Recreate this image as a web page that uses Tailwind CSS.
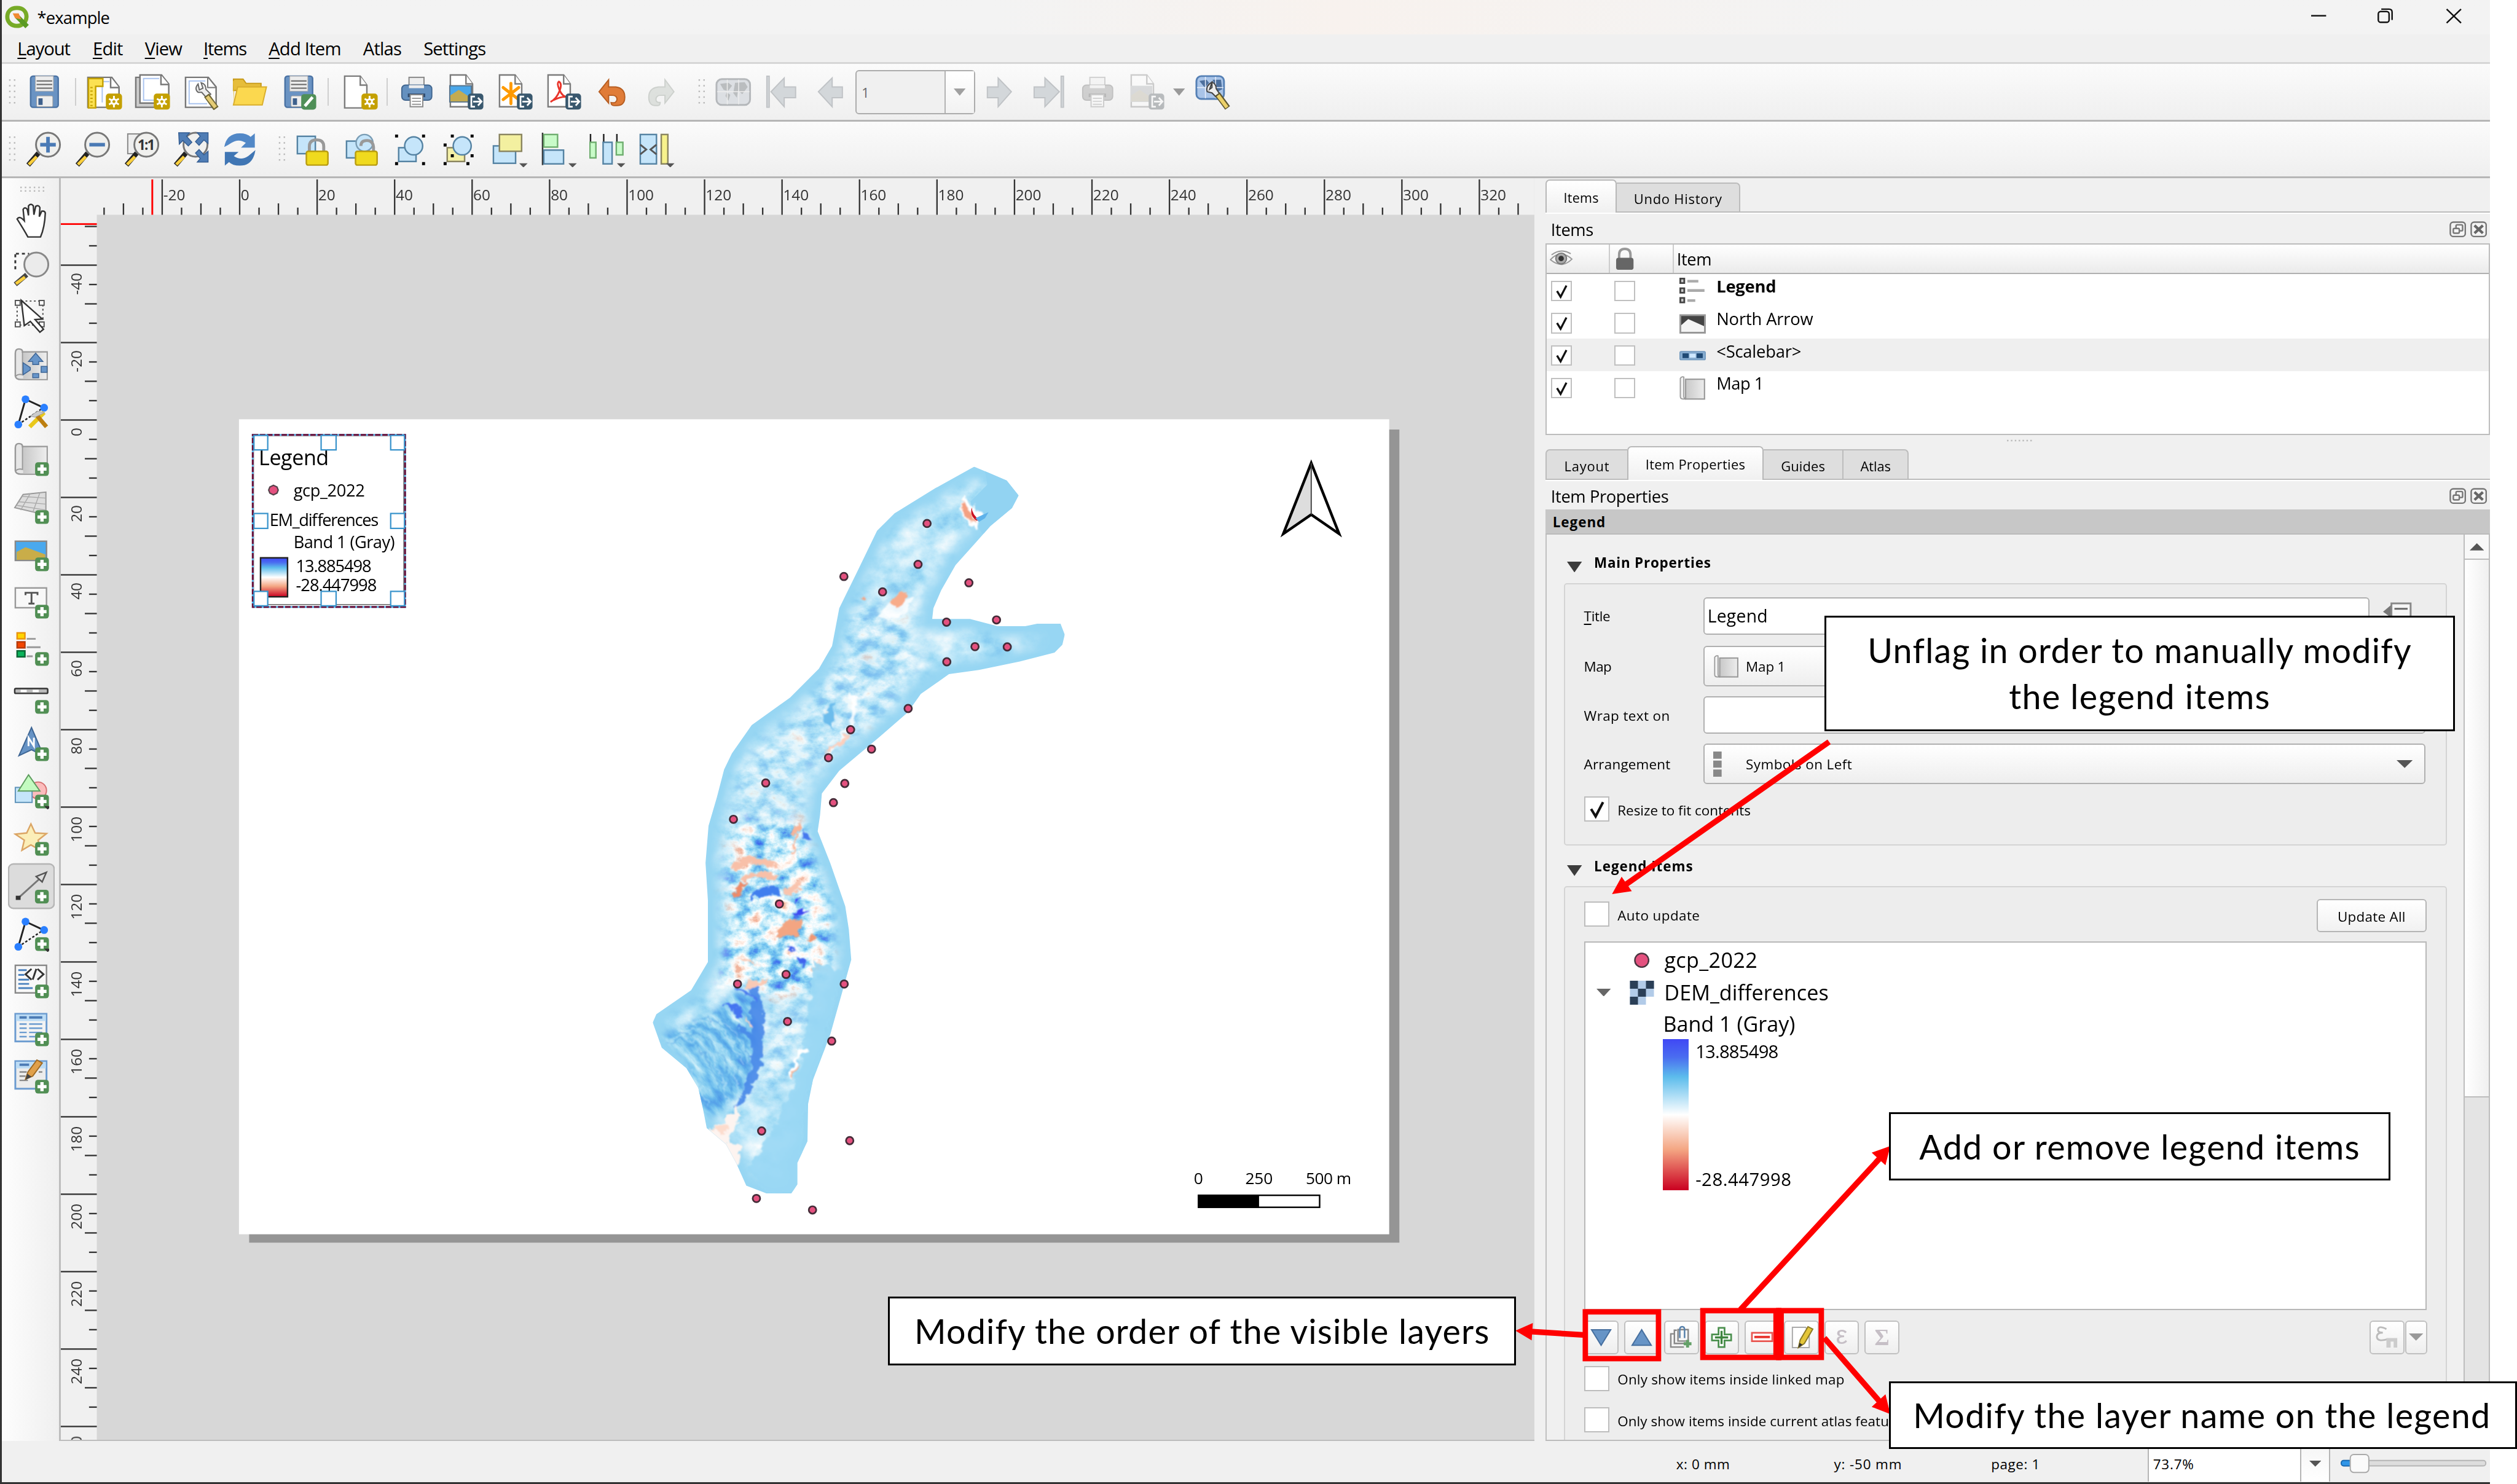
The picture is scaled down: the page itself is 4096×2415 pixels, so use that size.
<!DOCTYPE html>
<html lang="en">
<head>
<meta charset="utf-8">
<title>*example</title>
<script src="https://cdn.jsdelivr.net/npm/@tailwindcss/browser@4"></script>
</head>
<body class="h-[2415px] w-[4096px] overflow-hidden bg-white">
<svg class="absolute size-0">
  <symbol id="plus" viewBox="0 0 60 60"><rect x="36" y="36" width="23" height="23" rx="5" fill="#518f54"/><path d="M47.500 40v15M40 47.500h15" stroke="#fff" stroke-width="5.500"/></symbol>
  <symbol id="gear" viewBox="0 0 60 60"><rect x="32" y="33" width="27" height="27" rx="5" fill="#c4a000"/><path d="M45.500 37v19M37.300 41.700l16.400 9.500M53.700 41.700l-16.400 9.500" stroke="#fff" stroke-width="3"/><circle cx="45.500" cy="46.500" r="5.500" fill="#fff"/><circle cx="45.500" cy="46.500" r="2.500" fill="#c4a000"/></symbol>
  <symbol id="export" viewBox="0 0 60 60"><rect x="33" y="33" width="26" height="27" rx="5" fill="#39586e"/><path d="M45 38h-6v17h6M42 46.500h13M50 40l6 6.500-6 6.500" fill="none" stroke="#fff" stroke-width="2.800"/></symbol>
  <symbol id="page" viewBox="0 0 60 60"><path d="M4 2h26l11 15v38H4z" fill="#fff" stroke="#7c7c7c" stroke-width="2.500"/><path d="M30 2v15h11" fill="#fff" stroke="#7c7c7c" stroke-width="2.500"/></symbol>
  <symbol id="floppy" viewBox="0 0 60 60"><rect x="7" y="4" width="46" height="52" rx="4" fill="#6a93c3" stroke="#4a72a3" stroke-width="2.500"/><rect x="15" y="4" width="30" height="25" fill="#ececec" stroke="#aaa"/><path d="M17 12h26M17 18h26M17 24h26" stroke="#666" stroke-width="2"/><rect x="17" y="37" width="27" height="18" rx="2" fill="#eee" stroke="#999"/><rect x="20" y="41" width="7" height="11" fill="#3e608c"/></symbol>
  <symbol id="lens" viewBox="0 0 60 60"><path d="M21 36L4 56" stroke="#222" stroke-width="8"/><path d="M18 42L5 55" stroke="#fbcf3d" stroke-width="5"/><circle cx="37" cy="22" r="20" fill="#f0f0ee" stroke="#777" stroke-width="3"/></symbol>
  <symbol id="printer" viewBox="0 0 60 60"><rect x="17" y="6" width="25" height="20" fill="#eee" stroke="#888" stroke-width="2"/><rect x="5" y="19" width="50" height="25" rx="6" fill="#6490bf" stroke="#41668f" stroke-width="2"/><path d="M17 19h25v5H17z" fill="#eee"/><rect x="15" y="33" width="29" height="6" fill="#314d70"/><rect x="19" y="35" width="21" height="20" fill="#fff" stroke="#888" stroke-width="2"/><path d="M22 41h15M22 46h15M22 51h15" stroke="#999" stroke-width="2"/></symbol>
  <linearGradient id="paper"><stop offset="0" stop-color="#c8c8c8"/><stop offset="1" stop-color="#ededed"/></linearGradient>
  <symbol id="sheet" viewBox="0 0 60 60"><path d="M3 12q0-7 6-7t6 5h41v46H12q-8 0-9-6z" fill="#e6e6e6" stroke="#989898" stroke-width="2.500"/><path d="M16 11h39v44H16z" fill="url(#paper)"/><path d="M15 10v38q-7-2-11 2" fill="none" stroke="#989898" stroke-width="2"/></symbol>
  <symbol id="scroll" viewBox="0 0 60 60"><rect x="14" y="10" width="43" height="45" fill="url(#paper)" stroke="#999" stroke-width="3"/><path d="M2 8q3-5 8-3v44q0 5 5 6h-7q-6 0-6-6z" fill="#f2f2f2" stroke="#999" stroke-width="2.500"/></symbol>
  <symbol id="tick" viewBox="0 0 40 40"><path d="M10 20l8 13L31 8" fill="none" stroke="#111" stroke-width="4.500"/></symbol>
  <symbol id="grip" viewBox="0 0 12 44"><path d="M2 1v42M10 1v42" stroke="#bbb" stroke-width="2.500" stroke-dasharray="2.500 7"/></symbol>
  <symbol id="popout" viewBox="0 0 28 27"><rect x="1.500" y="1.500" width="25" height="24" rx="5" fill="#f4f4f4" stroke="#777" stroke-width="2.500"/><rect x="6.500" y="12" width="10" height="8" rx="2" fill="none" stroke="#777" stroke-width="2.500"/><path d="M11 12V8q0-2 2-2h7q2 0 2 2v6q0 2-2 2h-3" fill="none" stroke="#777" stroke-width="2.500"/></symbol>
  <symbol id="shut" viewBox="0 0 28 27"><rect x="1.500" y="1.500" width="25" height="24" rx="5" fill="#f4f4f4" stroke="#777" stroke-width="2.500"/><path d="M7 7l14 13M21 7L7 20" stroke="#666" stroke-width="4.500"/></symbol>
  <symbol id="nodes" viewBox="0 0 60 60"><path d="M8 52L20 10L50 24" fill="none" stroke="#222" stroke-width="3"/><path d="M8 52L50 24" stroke="#222" stroke-width="2.500" stroke-dasharray="4 3"/><circle cx="20" cy="10" r="6.500" fill="#2a7fff"/><circle cx="51" cy="24" r="6.500" fill="#2a7fff"/><circle cx="8" cy="52" r="6.500" fill="#2a7fff"/></symbol>
  <linearGradient id="ramp" x2="0" y2="1"><stop offset="0" stop-color="#4048f5"/><stop offset=".12" stop-color="#4a6df0"/><stop offset=".25" stop-color="#5cbcec"/><stop offset=".5" stop-color="#fff"/><stop offset=".73" stop-color="#f4a683"/><stop offset="1" stop-color="#ca0020"/></linearGradient>
</svg>

<div id="root" class="relative flex h-[2475px] w-[4197px] flex-col overflow-hidden bg-white font-['Open_Sans','Noto_Sans',sans-serif] leading-none text-black [zoom:0.97593]">
<div class="flex h-[2475px] w-[4152px] flex-col border-b-[3.1px] border-l-[3.1px] border-[#333] bg-[#f0f0f0]">

  <!-- Title bar -->
  <header class="flex h-[57px] shrink-0 items-center bg-linear-to-r from-[#f3f3f3] from-40% via-[#f8f2ee] via-54% to-[#f3f3f3] to-75% pl-[5px]">
    <svg class="h-[38px] w-[41px]" viewBox="0 0 41 38"><path d="M20 4C9 4 4 11 4 19s6 15 16 15c4 0 7-1 9-3M20 4c11 0 16 7 16 15 0 3-1 6-3 9" fill="none" stroke="#77ab27" stroke-width="7"/><path d="M20 18l17 17" stroke="#5a9a24" stroke-width="8"/><path d="M13 13h10l4 10-10-2z" fill="#f08a32"/></svg>
    <span data-w="121" class="mt-[1px] ml-[13px] whitespace-nowrap text-[28px]">*example</span>
    <svg class="mr-[47px] ml-auto h-[36px] w-[252px]" viewBox="0 0 252 36"><g fill="none" stroke="#111" stroke-width="2.500"><path d="M1 16h25"/><rect x="113" y="9" width="18" height="18" rx="4"/><path d="M118 5h13q5 0 5 5v13"/><path d="M227 5l24 23M251 5l-24 23"/></g></svg>
  </header>

  <!-- Menu -->
  <nav class="flex h-[50px] shrink-0 items-center border-b-[3.1px] border-[#d6d6d6] pt-[2px] pl-[26px] text-[30px] whitespace-nowrap">
    <span data-w="88"><u class="underline-offset-4">L</u>ayout</span>
    <span data-w="50" class="ml-[38px]"><u class="underline-offset-4">E</u>dit</span>
    <span data-w="62" class="ml-[37px]"><u class="underline-offset-4">V</u>iew</span>
    <span data-w="72" class="ml-[36px]"><u class="underline-offset-4">I</u>tems</span>
    <span data-w="121" class="ml-[37px]"><u class="underline-offset-4">A</u>dd Item</span>
    <span data-w="64" class="ml-[37px]">Atlas</span>
    <span data-w="104" class="ml-[37px]">Settings</span>
  </nav>

  <!-- Layout toolbar -->
  <div class="flex h-[96px] shrink-0 items-center border-b-[3.1px] border-[#b6b6b6] bg-linear-to-b from-[#fbfbfb] to-[#efefef] pl-[11px] [&>svg]:shrink-0">
    <svg class="h-[44px] w-[12px]"><use href="#grip"/></svg>
    <svg class="ml-[18px] size-[60px]"><use href="#floppy"/></svg>
    <i class="ml-[21px] h-[46px] w-[2px] bg-[#cfcfcf]"></i>
    <svg class="ml-[17px] size-[60px]" viewBox="0 0 60 60"><path d="M2 6h40l12 16v34H2z" fill="#fff" stroke="#777" stroke-width="2.500"/><path d="M40 6v17h14" fill="#fff" stroke="#777" stroke-width="2.500"/><path d="M26 13h12M26 14v34" stroke="#aac4ef" stroke-width="2"/><path d="M3 8h24v13H15v36H3z" fill="#fbe152" stroke="#c4a000" stroke-width="2.500"/><path d="M8 22v34" stroke="#c4a000" stroke-width="4" stroke-dasharray="2 4"/><use href="#gear"/></svg>
    <svg class="ml-[20px] size-[60px]" viewBox="0 0 60 60"><path d="M2 6h10v42h30v8H2z" fill="#ccc" stroke="#777" stroke-width="2.500"/><path d="M9 2h36l12 15v32H9z" fill="#fff" stroke="#777" stroke-width="2.500"/><path d="M44 2v16h13" fill="#fff" stroke="#777" stroke-width="2.500"/><path d="M41 8H15v36h30" fill="none" stroke="#aac4ef" stroke-width="2"/><use href="#gear"/></svg>
    <svg class="ml-[22px] size-[60px]" viewBox="0 0 60 60"><path d="M3 6h38l13 16v34H3z" fill="#fff" stroke="#777" stroke-width="2.500"/><path d="M36 12H9v38h30" fill="none" stroke="#aac4ef" stroke-width="2"/><path d="M40 6v17h14" fill="none" stroke="#777" stroke-width="2"/><path d="M24 17q-7 8 0 14l6 0 8 9 7-6-8-8q0-9-8-11l3 9-6 3z" fill="#eee" stroke="#666" stroke-width="2"/><path d="M38 36L54 58" stroke="#6d6432" stroke-width="10"/><path d="M39 38L53 56" stroke="#e5cc75" stroke-width="6"/></svg>
    <svg class="ml-[20px] size-[60px]" viewBox="0 0 60 60"><path d="M3 9h16l5 7h25v12H3z" fill="#e6bd3a" stroke="#c79a1b" stroke-width="2"/><path d="M2 12h2l0 40H4z" fill="#e6bd3a"/><path d="M10 22h48l-7 30H3z" fill="#fbd84f" stroke="#d9ae2c" stroke-width="2"/></svg>
    <svg class="ml-[22px] size-[60px]" viewBox="0 0 60 60"><use href="#floppy"/><rect x="34" y="34" width="25" height="26" rx="5" fill="#4f8f57"/><path d="M40 54l13-15" stroke="#fff" stroke-width="5"/></svg>
    <i class="ml-[18px] h-[46px] w-[2px] bg-[#cfcfcf]"></i>
    <svg class="ml-[23px] size-[60px]" viewBox="0 0 60 60"><g transform="translate(0 2)"><use href="#page"/></g><use href="#gear"/></svg>
    <i class="ml-[14px] h-[46px] w-[2px] bg-[#cfcfcf]"></i>
    <svg class="ml-[18px] size-[60px]"><use href="#printer"/></svg>
    <svg class="ml-[22px] size-[60px]" viewBox="0 0 60 60"><use href="#page"/><rect x="3" y="20" width="36" height="27" fill="#4aa7ea" stroke="#57728a" stroke-width="2"/><path d="M4 36l14-9 20 13v6H4z" fill="#c4ab51"/><use href="#export"/></svg>
    <svg class="ml-[22px] size-[60px]" viewBox="0 0 60 60"><use href="#page"/><path d="M23 16v34M10 23l26 20M36 23L10 43" stroke="#ff9a00" stroke-width="5" stroke-linecap="round"/><use href="#export"/></svg>
    <svg class="ml-[21px] size-[60px]" viewBox="0 0 60 60"><use href="#page"/><path d="M8 47q10-5 15-18t-1-16q-4 2 1 14t14 12q-10-2-24 5" fill="none" stroke="#e9352b" stroke-width="3"/><use href="#export"/></svg>
    <svg class="ml-[21px] size-[60px]" viewBox="0 0 60 60"><path d="M8 30L24 10v12h12q15 2 15 17t-15 14q-8 1-8-5 9 2 10-5 0-7-8-7h-6v13z" fill="#e07c38" stroke="#b75e22" stroke-width="2"/></svg>
    <svg class="ml-[21px] size-[60px] opacity-60" viewBox="0 0 60 60"><path d="M52 30L37 10v12H26Q10 24 10 39t13 14q6 1 6-5-7 0-7-5 0-7 8-7h7v13z" fill="#cfd4cf" stroke="#b3b9b3" stroke-width="2"/></svg>
    <svg class="ml-[32px] h-[44px] w-[12px]"><use href="#grip"/></svg>
    <svg class="ml-[17px] size-[60px]" viewBox="0 0 60 60"><rect x="2" y="9" width="56" height="43" rx="9" fill="#dcdfe3" stroke="#b5b8bb" stroke-width="3"/><path d="M8 17l14-2 6 5-7 9-7-2zM19 31l6 4-3 10-5-8zM33 15l16-1 5 8-9 12-7-6-2 12-6-8z" fill="#babdbf"/><path d="M3 30h54M20 10v41M39 10v41" stroke="#eee" stroke-width="1.500"/></svg>
    <svg class="ml-[21px] size-[60px]" viewBox="0 0 60 60"><g fill="#d3d7da" stroke="#c0c3c6" stroke-width="2"><path d="M5 4h4v52H5z"/><path d="M12 30L34 7v15h19v18H34v15z"/></g></svg>
    <svg class="ml-[22px] size-[60px]" viewBox="0 0 60 60"><path d="M9 30L32 7v15h17v18H32v15z" fill="#d3d7da" stroke="#c0c3c6" stroke-width="2"/></svg>
    <div class="ml-[11px] flex h-[74px] w-[199px] rounded-[6px] border-[2.100px] border-[#acacac] bg-[#f0f0f0]">
      <span class="flex flex-1 items-center pt-[3px] pl-[8px] text-[22px] text-[#666]">1</span>
      <span class="flex w-[49px] items-center justify-center border-l-[2.100px] border-[#b3b3b3] bg-linear-to-b from-white to-[#f2f2f2]"><svg class="h-[12px] w-[20px]" viewBox="0 0 20 12"><path d="M0 0h20L10 12z" fill="#a0a0a0"/></svg></span>
    </div>
    <svg class="ml-[11px] size-[60px]" viewBox="0 0 60 60"><path d="M50 30L28 7v15H10v18h18v15z" fill="#d3d7da" stroke="#c0c3c6" stroke-width="2"/></svg>
    <svg class="ml-[22px] size-[60px]" viewBox="0 0 60 60"><g fill="#d3d7da" stroke="#c0c3c6" stroke-width="2"><path d="M51 4h4v52h-4z"/><path d="M48 30L24 7v15H6v18h18v15z"/></g></svg>
    <svg class="ml-[22px] size-[60px] opacity-35 grayscale"><use href="#printer"/></svg>
    <svg class="ml-[22px] size-[60px] opacity-35 grayscale-75" viewBox="0 0 60 60"><use href="#page"/><rect x="3" y="20" width="36" height="27" fill="#9ab" /><path d="M4 36l14-9 20 13v6H4z" fill="#c4ab51"/><use href="#export"/></svg>
    <svg class="ml-[13px] h-[12px] w-[20px]" viewBox="0 0 20 12"><path d="M0 0h20L10 12z" fill="#999"/></svg>
    <svg class="ml-[17px] size-[60px]" viewBox="0 0 60 60"><rect x="2" y="4" width="46" height="38" rx="8" fill="#a9c4e8" stroke="#5580b5" stroke-width="3"/><path d="M7 12l12-2 4 5-7 8zM29 10l14 0 2 16-8 4z" fill="#4c6f9d"/><path d="M3 23h44M17 5v36M34 5v36" stroke="#e8eefa" stroke-width="1.500"/><path d="M28 14q-11 6-8 16l8 2 7 7 6-5-6-9q0-8-7-11l0 9-4 3z" fill="#eee" stroke="#444" stroke-width="2"/><path d="M37 34L54 57" stroke="#5d5631" stroke-width="10"/><path d="M38 36L53 56" stroke="#ecd16a" stroke-width="6"/></svg>
  </div>

  <!-- Navigation / actions toolbar -->
  <div class="flex h-[94px] shrink-0 items-center border-b-[3.1px] border-[#b6b6b6] bg-linear-to-b from-[#fbfbfb] to-[#efefef] pt-[1px] pl-[11px] [&>svg]:shrink-0">
    <svg class="h-[44px] w-[12px]"><use href="#grip"/></svg>
    <svg class="ml-[17px] size-[60px]" viewBox="0 0 60 60"><use href="#lens"/><path d="M37 9v26M24 22h26" stroke="#4a7ab5" stroke-width="6"/></svg>
    <svg class="ml-[22px] size-[60px]" viewBox="0 0 60 60"><use href="#lens"/><path d="M24 22h26" stroke="#4a7ab5" stroke-width="6"/></svg>
    <svg class="ml-[22px] size-[60px]" viewBox="0 0 60 60"><rect x="6" y="4" width="32" height="33" fill="#eee" stroke="#888" stroke-width="2"/><use href="#lens"/><text x="37" y="31" font-size="23" font-weight="700" text-anchor="middle" textLength="29" fill="#333">1:1</text></svg>
    <svg class="ml-[22px] size-[60px]" viewBox="0 0 60 60"><use href="#lens"/><path d="M9 2h18l-5 6 9 10-6 6-9-9-6 6zM58 2H40l5 6-8 9 6 6 8-9 7 6zM58 51H40l5-6-8-9 6-6 8 9 7-6z" fill="#4f7db5" stroke="#345d92" stroke-width="1.500"/></svg>
    <svg class="ml-[21px] size-[60px]" viewBox="0 0 60 60"><path d="M4 26Q8 3 30 3q12 0 18 6l7-6v24H32l8-8q-12-8-24 0-6 4-12 7z" fill="#5288c7"/><path d="M56 31Q52 57 30 57q-12 0-18-6l-7 6V34h23l-8 7q12 8 24 0z" fill="#4076b4"/></svg>
    <svg class="ml-[34px] h-[44px] w-[12px]"><use href="#grip"/></svg>
    <svg class="ml-[16px] size-[60px]" viewBox="0 0 60 60"><rect x="4" y="8" width="30" height="29" fill="#c5e5fa" stroke="#5583a3" stroke-width="2.500"/><path d="M24 35V25q0-11 12-11t12 11v10" fill="none" stroke="#999" stroke-width="5"/><rect x="19" y="33" width="36" height="23" rx="3" fill="#f0da1e" stroke="#b99d10" stroke-width="2.500"/></svg>
    <svg class="ml-[22px] size-[60px]" viewBox="0 0 60 60"><rect x="4" y="16" width="24" height="28" fill="#c5e5fa" stroke="#5583a3" stroke-width="2.500"/><circle cx="34" cy="19" r="14" fill="#c5e5fa" stroke="#7a9db5" stroke-width="2.500"/><path d="M28 24q0-9 10-9t11 11v10" fill="none" stroke="#999" stroke-width="5"/><rect x="19" y="33" width="36" height="23" rx="3" fill="#f0da1e" stroke="#b99d10" stroke-width="2.500"/></svg>
    <svg class="ml-[21px] size-[60px]" viewBox="0 0 60 60"><rect x="10" y="27" width="29" height="23" fill="#c5e5fa" stroke="#5583a3" stroke-width="2.500"/><circle cx="35" cy="24" r="15" fill="#c5e5fa" stroke="#5583a3" stroke-width="2.500"/><path d="M4 5h5v5H4zM49 5h5v5h-5zM4 51h5v5H4zM49 51h5v5h-5z"/></svg>
    <svg class="ml-[21px] size-[60px]" viewBox="0 0 60 60"><rect x="10" y="27" width="29" height="23" fill="#f4f0a6" stroke="#8a8560" stroke-width="2.500"/><circle cx="35" cy="24" r="15" fill="#c5e5fa" stroke="#5583a3" stroke-width="2.500"/><path d="M16 5h5v5h-5zM49 5h5v5h-5zM4 20h5v5H4zM4 51h5v5H4zM42 51h5v5h-5zM16 38h5v5h-5zM49 38h5v5h-5z"/></svg>
    <svg class="ml-[25px] size-[60px]" viewBox="0 0 60 60"><rect x="2" y="24" width="37" height="29" fill="#c5e5fa" stroke="#5583a3" stroke-width="2.500"/><rect x="12" y="5" width="37" height="28" fill="#f3f0a0" stroke="#8a8560" stroke-width="2.500"/><path d="M45 53h14l-7 7z" fill="#555"/></svg>
    <svg class="ml-[22px] size-[60px]" viewBox="0 0 60 60"><path d="M2 2v54" stroke="#333" stroke-width="2.500"/><rect x="4" y="5" width="23" height="21" fill="#c9fbc9" stroke="#6fae6f" stroke-width="2.500"/><rect x="4" y="31" width="33" height="23" fill="#c5e5fa" stroke="#5583a3" stroke-width="2.500"/><path d="M45 53h14l-7 7z" fill="#555"/></svg>
    <svg class="ml-[20px] size-[60px]" viewBox="0 0 60 60"><path d="M2 4v14M24 4v14M46 4v14" stroke="#222" stroke-width="2.500"/><rect x="1" y="18" width="10" height="26" fill="#c9fbc9" stroke="#6fae6f" stroke-width="2.500"/><rect x="23" y="18" width="15" height="36" fill="#c5e5fa" stroke="#5583a3" stroke-width="2.500"/><rect x="45" y="18" width="11" height="21" fill="#c9fbc9" stroke="#6fae6f" stroke-width="2.500"/><path d="M46 53h14l-7 7z" fill="#555"/></svg>
    <svg class="ml-[23px] size-[60px]" viewBox="0 0 60 60"><rect x="2" y="5" width="27" height="49" fill="#c5e5fa" stroke="#5583a3" stroke-width="2.500"/><path d="M2 22l10 8-10 8M29 22l-10 8 10 8" fill="none" stroke="#555" stroke-width="3"/><rect x="37" y="5" width="11" height="49" fill="#f7f28c" stroke="#8a8560" stroke-width="2.500"/><path d="M45 53h14l-7 7z" fill="#555"/></svg>
  </div>

  <div class="flex min-h-0 flex-1">
    <!-- Toolbox -->
    <aside class="relative flex w-[98px] shrink-0 flex-col items-center gap-[19.200px] border-r-[3.1px] border-[#bdbdbd] bg-linear-to-r from-[#fdfdfd] to-[#efefef] pt-[42px] pl-[3px] [&>svg]:size-[60px] [&>svg]:shrink-0">
      <svg class="absolute top-[14px] left-[30px] !h-[10px] !w-[42px]" viewBox="0 0 42 10"><path d="M1 2h40M1 8h40" stroke="#bbb" stroke-width="2.500" stroke-dasharray="2.500 5"/></svg>
      <svg viewBox="0 0 60 60"><path d="M6 26q4-6 12 3l-2-19q3-5 7 0l2 10 0-16q4-5 8 0l1 15 3-14q5-3 7 2l-1 15 4-9q5-1 6 3-1 24-8 40H24Q18 45 6 26z" fill="#fff" stroke="#333" stroke-width="2.500"/></svg>
      <svg viewBox="0 0 60 60"><path d="M4 5h22M3 6v28" stroke="#333" stroke-width="3" stroke-dasharray="5 5"/><path d="M22 40L3 56" stroke="#444" stroke-width="8"/><path d="M19 44L4 55" stroke="#fbcf3d" stroke-width="5"/><circle cx="38" cy="23" r="20" fill="#ebebeb" stroke="#888" stroke-width="3"/></svg>
      <svg viewBox="0 0 60 60"><rect x="6" y="5" width="43" height="40" fill="none" stroke="#444" stroke-width="2" stroke-dasharray="3 4"/><path d="M3 4h8v8H3zM43 4h8v8h-8zM3 40h8v8H3zM43 40h8v8h-8z" fill="#fff" stroke="#555" stroke-width="2"/><path d="M13 4l5 42 10-7 16 18 6-5-14-16 12-1z" fill="#fff" stroke="#333" stroke-width="2.500"/></svg>
      <svg viewBox="0 0 60 60"><use href="#sheet"/><g fill="#6795c9" stroke="#3d6596" stroke-width="1.500"><path d="M37 12l12 14h-7v5H32v-5h-7zM16 28l12 8v4l-12 8zM32 46h10v7H32zM46 34h10v10H46z"/></g></svg>
      <svg viewBox="0 0 60 60"><use href="#nodes"/><path d="M27 56l24-24" stroke="#e9c81c" stroke-width="7"/><path d="M55 56L38 36" stroke="#bd7f10" stroke-width="7"/><path d="M28 38l12-8 12 2-16 8z" fill="#ccc" stroke="#999"/></svg>
      <svg viewBox="0 0 60 60"><use href="#sheet"/><use href="#plus"/></svg>
      <svg viewBox="0 0 60 60"><path d="M2 32L16 10l38-4v38z" fill="#ddd" stroke="#999" stroke-width="2"/><path d="M8 22l46 4M12 36l16-28M32 40l12-33M5 28l49 8M14 13l40 3" stroke="#aaa" stroke-width="1.500" fill="none"/><use href="#plus"/></svg>
      <svg viewBox="0 0 60 60"><rect x="3" y="9" width="52" height="32" fill="#4aa9ee" stroke="#888" stroke-width="2.500"/><path d="M5 27l15-8 33 12v9H5z" fill="#c9ad49"/><use href="#plus"/></svg>
      <svg viewBox="0 0 60 60"><rect x="3" y="8" width="52" height="33" fill="#f8f8f8" stroke="#999" stroke-width="2.500"/><path d="M20 20v-4h20v4M30 16v18M25 34h10" stroke="#555" stroke-width="3" fill="none"/><use href="#plus"/></svg>
      <svg viewBox="0 0 60 60"><rect x="6" y="4" width="13" height="10" fill="#ffd500" stroke="#e9940c" stroke-width="2.500"/><rect x="6" y="19" width="13" height="10" fill="#f44500" stroke="#b53a0b" stroke-width="2.500"/><rect x="6" y="34" width="13" height="10" fill="#0bb45b" stroke="#0b6634" stroke-width="2.500"/><path d="M22 14h15M22 28h23M22 43h10" stroke="#999" stroke-width="3"/><use href="#plus"/></svg>
      <svg viewBox="0 0 60 60"><rect x="2" y="17" width="55" height="8" rx="2" fill="#bbb" stroke="#333" stroke-width="2.500"/><path d="M12 21h10M32 21h10" stroke="#fff" stroke-width="4"/><use href="#plus"/></svg>
      <svg viewBox="0 0 60 60"><path d="M30 3L50 50 30 40 9 50z" fill="#6693c5" stroke="#3c6493" stroke-width="2"/><path d="M25 34V20l9 14V20" fill="none" stroke="#fff" stroke-width="3"/><use href="#plus"/></svg>
      <svg viewBox="0 0 60 60"><circle cx="41" cy="29" r="14" fill="#fcbcbc" stroke="#d46f6f" stroke-width="2"/><rect x="3" y="24" width="28" height="25" fill="#c5e5fa" stroke="#5f93ba" stroke-width="2"/><path d="M25 3L44 30H8z" fill="#c3fbc0" stroke="#5e9c5e" stroke-width="2"/><use href="#plus"/><path d="M51 55h12l-6 6z" fill="#333"/></svg>
      <svg viewBox="0 0 60 60"><path d="M29 6l7 15 19 1-14 11 4 17-16-9-15 9 4-17L3 23l19-2z" fill="#fbeeb8" stroke="#dba565" stroke-width="2.500"/><use href="#plus"/></svg>
      <svg viewBox="-9 -9 78 78" class="-my-[9px] !h-[78px] !w-[78px]"><rect x="-8" y="-7" width="76" height="74" rx="8" fill="#dcdcdc" stroke="#b5b5b5" stroke-width="2.500"/><path d="M8 50L50 12" stroke="#777" stroke-width="3"/><rect x="4" y="46" width="8" height="7" fill="#333"/><path d="M55 7L38 14l10 9z" fill="#ddd" stroke="#555" stroke-width="2.500"/><use href="#plus" width="60" height="60"/></svg>
      <svg viewBox="0 0 60 60"><use href="#nodes"/><use href="#plus"/><path d="M51 55h12l-6 6z" fill="#333"/></svg>
      <svg viewBox="0 0 60 60"><rect x="3" y="4" width="52" height="46" fill="#f8f8f8" stroke="#888" stroke-width="2.500"/><path d="M8 12h14M8 20h10M8 28h18M8 35h18M8 42h24" stroke="#4c83bf" stroke-width="3"/><path d="M30 10l-10 9 10 9M32 28l6-18M40 10l10 9-10 9" fill="none" stroke="#333" stroke-width="3"/><use href="#plus"/></svg>
      <svg viewBox="0 0 60 60"><rect x="3" y="5" width="52" height="46" fill="#f3f3f3" stroke="#6b9bd0" stroke-width="3"/><rect x="4" y="6" width="50" height="11" fill="#bcdcf5"/><path d="M10 11h12M26 11h22" stroke="#4c7bb5" stroke-width="4"/><path d="M10 22h12M26 22h22M10 29h12M26 29h22M10 36h12M26 36h22M10 43h12M26 43h10" stroke="#6b9bd0" stroke-width="2.500"/><use href="#plus"/></svg>
      <svg viewBox="0 0 60 60"><rect x="3" y="5" width="52" height="46" fill="#ececec" stroke="#6b9bd0" stroke-width="3"/><rect x="4" y="6" width="50" height="11" fill="#bcdcf5"/><path d="M10 11h16" stroke="#4c7bb5" stroke-width="4"/><path d="M10 23h12M10 30h10M10 37h14M42 23h6" stroke="#888" stroke-width="2.500"/><path d="M20 35l4-12 15-20 9 5-16 22z" fill="#e0a04b" stroke="#9f6a24" stroke-width="2"/><path d="M20 36l3-10 7 5z" fill="#444"/><use href="#plus"/></svg>
    </aside>

    <!-- Canvas -->
    <main class="w-[2457px] shrink-0 border-b-[2.100px] border-[#bdbdbd] bg-[#d7d7d7]">
      <svg class="block h-[2104px] w-[2457px]" viewBox="101 297 2457 2104">
        <defs>
          <path id="area" d="M1624 778L1678 801 1698 826 1687 847 1651 877 1627 904 1593 942 1569 984 1556 1014 1554 1032 1617 1032 1663 1044 1709 1044 1729 1040 1768 1040 1775 1058 1771 1075 1758 1088 1700 1103 1632 1117 1582 1124 1535 1157 1513 1188 1467 1228 1399 1285 1370 1323 1367 1359 1363 1386 1384 1439 1409 1511 1415 1550 1419 1600 1404 1654 1384 1725 1355 1801 1347 1841 1346 1903 1329 1939 1329 1975 1319 1990 1278 1990 1244 1977 1227 1939 1210 1908 1178 1881 1172 1850 1164 1814 1144 1781 1103 1747 1088 1705 1094 1691 1152 1651 1180 1604 1180 1502 1176 1439 1181 1377 1195 1329 1207 1283 1220 1256 1253 1209 1317 1163 1365 1115 1387 1077 1399 1014 1428 955 1462 885 1491 856 1559 814z"/>
          <clipPath id="clip"><use href="#area"/></clipPath>
          <filter id="soft"><feGaussianBlur stdDeviation="8"/></filter>
          <filter id="soft2" x="-50%" y="-50%" width="200%" height="200%"><feGaussianBlur stdDeviation="16"/></filter>
          <filter id="soft3" x="-50%" y="-50%" width="200%" height="200%"><feGaussianBlur stdDeviation="5"/></filter>
          <mask id="inner" maskUnits="userSpaceOnUse" x="1050" y="740" width="760" height="1300"><g filter="url(#soft)"><use href="#area" fill="#fff"/><use href="#area" fill="none" stroke="#000" stroke-width="52"/></g></mask>
          <mask id="rough" maskUnits="userSpaceOnUse" x="1050" y="740" width="760" height="1300"><g filter="url(#soft2)" fill="#fff"><path d="M1215 1370L1350 1360 1395 1500 1385 1640 1300 1670 1200 1640z"/></g></mask>
          <mask id="mid" maskUnits="userSpaceOnUse" x="1050" y="740" width="760" height="1300"><g filter="url(#soft2)" fill="#fff"><path d="M1410 1000L1520 1010 1530 1110 1490 1200 1400 1250 1330 1300 1350 1380 1220 1400 1220 1280 1330 1190z" fill="#aaa"/><path d="M1270 1660L1380 1640 1330 1790 1260 1840z" fill="#999"/></g></mask>
          <mask id="lobemask" maskUnits="userSpaceOnUse" x="1050" y="1600" width="300" height="320"><path d="M1100 1732q40-26 92-50l36-30 34 10 2 80-16 70-62 52-18-20-24-80z" fill="#fff" filter="url(#soft3)"/></mask>
          <filter id="calm" x="0" y="0" width="100%" height="100%" color-interpolation-filters="sRGB"><feTurbulence type="fractalNoise" baseFrequency=".022 .026" numOctaves="6" seed="7"/><feColorMatrix values=".75 0 0 0 .14 .75 0 0 0 .14 .75 0 0 0 .14 0 0 0 0 1"/><feComponentTransfer><feFuncR type="table" tableValues=".35 .4 .45 .52 .63 .73 .83 .92 1 1 1"/><feFuncG type="table" tableValues=".6 .65 .72 .79 .86 .9 .94 .97 1 .98 .9"/><feFuncB type="table" tableValues=".9 .92 .93 .94 .96 .975 .985 .99 1 .96 .85"/></feComponentTransfer></filter>
          <filter id="ripple" x="0" y="0" width="100%" height="100%" color-interpolation-filters="sRGB"><feTurbulence type="fractalNoise" baseFrequency=".032 .045" numOctaves="5" seed="21"/><feColorMatrix values="1.200 0 0 0 -.08 1.200 0 0 0 -.08 1.200 0 0 0 -.08 0 0 0 0 1"/><feComponentTransfer><feFuncR type="table" tableValues=".3 .35 .4 .47 .6 .72 .84 .97 1 1 .98"/><feFuncG type="table" tableValues=".6 .65 .7 .76 .84 .9 .94 .99 1 .92 .82"/><feFuncB type="table" tableValues=".9 .92 .93 .94 .96 .975 .985 1 .98 .88 .75"/></feComponentTransfer></filter>
          <filter id="wild" x="0" y="0" width="100%" height="100%" color-interpolation-filters="sRGB"><feTurbulence type="fractalNoise" baseFrequency=".032 .04" numOctaves="5" seed="12"/><feColorMatrix values="1.450 0 0 0 -.2 1.450 0 0 0 -.2 1.450 0 0 0 -.2 0 0 0 0 1"/><feComponentTransfer><feFuncR type="table" tableValues=".25 .28 .36 .45 .6 .76 .9 1 1 .98 .95"/><feFuncG type="table" tableValues=".4 .52 .66 .77 .85 .92 .97 1 .95 .84 .7"/><feFuncB type="table" tableValues=".93 .93 .93 .94 .96 .98 .99 1 .92 .78 .6"/></feComponentTransfer></filter>
          <filter id="lobe" x="0" y="0" width="100%" height="100%" color-interpolation-filters="sRGB"><feTurbulence type="fractalNoise" baseFrequency=".02 .05" numOctaves="5" seed="5"/><feColorMatrix values="1 0 0 0 0 1 0 0 0 0 1 0 0 0 0 0 0 0 0 1"/><feComponentTransfer><feFuncR type="table" tableValues=".25 .28 .32 .36 .42 .5 .6 .72 .85 .95 1"/><feFuncG type="table" tableValues=".5 .55 .6 .67 .73 .79 .84 .9 .95 .98 1"/><feFuncB type="table" tableValues=".9 .9 .91 .92 .93 .94 .95 .97 .98 1 1"/></feComponentTransfer></filter>
          <filter id="edge" x="-20%" y="-20%" width="140%" height="140%"><feTurbulence type="fractalNoise" baseFrequency=".07" numOctaves="3" seed="3" result="n"/><feDisplacementMap in="SourceGraphic" in2="n" scale="20" xChannelSelector="R" yChannelSelector="G"/><feGaussianBlur stdDeviation="1.200"/></filter>
        </defs>
        <path d="M415 2057H2315V716h18v1356H415z" fill="#959595"/>
        <rect x="398" y="699" width="1918" height="1359" fill="#fff"/>

        <!-- elevation difference raster -->
        <g clip-path="url(#clip)">
          <rect x="1050" y="740" width="760" height="1300" fill="#97d6f3"/>
          <g mask="url(#inner)">
            <rect x="1050" y="740" width="760" height="1300" filter="url(#calm)"/>
            <g mask="url(#mid)"><rect x="1050" y="740" width="760" height="1300" filter="url(#ripple)"/></g>
            <g mask="url(#rough)"><rect x="1050" y="740" width="760" height="1300" filter="url(#wild)"/></g>
          </g>
          <path d="M1642 785l56 25v60l-60 20-14-20-6-34 28-28z" fill="#92d3f2"/>
          <path d="M1356 1600l50 20-70 250 0 120h-60l-30-40 50-80 40-90z" fill="#9ad8f4" opacity=".9" filter="url(#edge)"/>
          <g mask="url(#lobemask)">
            <g transform="rotate(50 1180 1780)"><rect x="1040" y="1640" width="280" height="280" filter="url(#lobe)"/></g>
            <g fill="none" stroke="#4394e0" stroke-width="2.500" opacity=".45" filter="url(#edge)"><path d="M1110 1735q60-10 82 60t5 90M1128 1722q60-8 84 64t2 96M1146 1710q60-6 84 72t0 96M1166 1698q58 2 78 80t-8 90M1186 1688q48 8 66 82t-8 80"/></g>
            <g fill="none" stroke="#c4e8f8" stroke-width="2.500" opacity=".55" filter="url(#edge)"><path d="M1119 1730q60-8 83 62t4 92M1137 1716q60-8 84 68t2 96M1156 1704q60-2 82 76M1176 1692q52 6 72 80M1110 1755q50 20 68 90"/></g>
          </g>
          <g filter="url(#edge)">
            <path d="M1252 1640q18 6 20 44t0 80q-6 40-44 86l-5-3q30-48 30-88t-24-44l1-10q14 6 24 20l-2-78z" fill="#4686e8" opacity=".9"/>
            <path d="M1200 1674h28l8 22-8 0-6-14z" fill="#4574f0"/>
            <path d="M1224 1652q24-2 34 16" stroke="#4a7aee" stroke-width="5" fill="none"/>
            <path d="M1240 1690l16 22-10-2z" fill="#fbd6c6"/>
            <path d="M1180 1884q32-10 48-42l6 12-20 50 24 8-12 46-14-30z" fill="#fdf4f0"/>
            <path d="M1186 1882l24-8 4 20z" fill="#fcdccd"/>
            <path d="M1345 1748q-28 20-24 50" stroke="#fff" stroke-width="6" fill="none"/>
            <path d="M1328 1775l-6 22" stroke="#f8b79a" stroke-width="4"/>
            <path d="M1222 1444q16-22 44-14 22 4 36 18l-30-6q-26-4-44 8zM1240 1462q25-14 60-4l-6 5q-34-4-60 10z" fill="#f8c0a8"/>
            <path d="M1222 1490l24-24-8 22-14 8z" fill="#ee8a68"/>
            <path d="M1250 1494q16-20 48-12l4 14q-26-8-52 4z" fill="#3f7eee"/>
            <path d="M1308 1484l24-14 6 10-24 14z" fill="#f9c4ae"/>
            <path d="M1322 1498l14 0-8 8zM1322 1522l26-6-16 12z" fill="#3a45f0"/>
            <path d="M1292 1564l22-32 28 6-14 24z" fill="#f3a582"/>
            <path d="M1345 1564l16-8-4 10z" fill="#f09672"/>
            <path d="M1306 1576l22 10-14-1zM1326 1594l20 6-8 16z" fill="#3f62ee"/>
            <path d="M1228 1590l44 26-34-14zM1246 1638l36-6-6 10-30 6z" fill="#f9cab6"/>
            <path d="M1320 1392q2-18 12-22l2 10z" fill="#f9b497"/>
            <path d="M1322 1424l6-40" stroke="#f9b497" stroke-width="3"/>
            <path d="M1336 1380l16 22-12-4z" fill="#4478ee"/>
            <path d="M1392 1172l-2 48-20-26z" fill="#6cbcec"/>
            <path d="M1416 1150l12 10-4 50-30 40-32 22 28-26 26-36z" fill="#fff" opacity=".85"/>
            <path d="M1424 1220l-20 22-34 18 26-22z" fill="#fccfbd"/>
            <path d="M1460 1028q20 14 48-5l18-28-40 8z" fill="#fff" opacity=".8"/>
            <path d="M1488 1002q12-18 24-12l-4 16-16 6z" fill="#f8ac8a"/>
            <path d="M1436 998l8-6 0 10z" fill="#f5a282"/>
            <path d="M1602 824l26 22 8 20-4 18-28-22z" fill="#fff"/>
            <path d="M1603 832l10 20 8 4 8 16-20-10z" fill="#f4a182"/>
            <path d="M1664 1142l-10-6-14-4 18 2z" fill="#fff"/>
            <path d="M1698 1130q16-12 20-10l-10 10z" fill="#fff" opacity=".7"/>
          </g>
          <path d="M1620 846q0 12 14 22l-6 0q-12-8-8-22z" fill="#ca1020"/>
          <path d="M1626 864l22-10-6 10-10 6z" fill="#5eb2ea"/>
        </g>
        <g id="points" fill="#e4517f" stroke="#442c38" stroke-width="2.800"></g>

        <!-- north arrow -->
        <path d="M2186 772L2231.500 889 2186 858z" fill="#fff"/><path d="M2186 772L2140.500 889 2186 858z" fill="#ddd"/>
        <path d="M2186 772L2232.500 890 2186 858 2139.500 890z" fill="none" stroke="#000" stroke-width="4.500"/><path d="M2186 772v86" stroke="#444" stroke-width="2"/>

        <!-- scale bar -->
        <rect x="1998" y="1993" width="202" height="20" fill="#fff" stroke="#000" stroke-width="2.500"/><rect x="1997" y="1992" width="102" height="22"/>
        <g font-size="27"><text x="1998" y="1974" text-anchor="middle">0</text><text x="2099" y="1974" text-anchor="middle" textLength="46">250</text><text x="2177" y="1974" textLength="76">500 m</text></g>

        <!-- legend item -->
        <rect x="421" y="724" width="255" height="288" fill="#fff"/>
        <path d="M673 726v282H424" fill="none" stroke="#777" stroke-width="2"/><path d="M424 727h250M423 726v282" stroke="#ccc" stroke-width="1.500"/>
        <g font-size="28">
          <text x="431" y="776" font-size="35" textLength="117">Legend</text>
          <text x="489" y="828" textLength="119">gcp_2022</text>
          <text x="449" y="877" textLength="182">EM_differences</text>
          <text x="489" y="914" textLength="169">Band 1 (Gray)</text>
          <text x="493" y="954" textLength="126">13.885498</text><text x="493" y="986" textLength="135">-28.447998</text>
        </g>
        <path d="M455.500 809l6 3 2 5-2 5-6 3-6-3-2-5 2-5z" fill="#e4517f" stroke="#54424a" stroke-width="2.200"/>
        <rect x="434" y="930" width="45" height="65" fill="url(#ramp)" stroke="#222" stroke-width="2.500"/>
        <rect x="421" y="725" width="254" height="287" fill="none" stroke="#5ab4e8" stroke-width="3"/>
        <rect x="421" y="725" width="254" height="287" fill="none" stroke="#6b0f38" stroke-width="3" stroke-dasharray="9 3"/>
        <path d="M423 726h23v24h-23zM535 726h25v24h-25zM651 726h23v24h-23zM423 856h23v25h-23zM651 856h23v25h-23zM423 986h23v24h-23zM535 986h25v24h-25zM651 986h23v24h-23z" fill="#fff" stroke="#3a94cc" stroke-width="2.300"/>

        <!-- rulers -->
        <path d="M101 297h2457v61H161v2043h-60z" fill="#f0f0f0"/>
        <g id="ruler" fill="#333" font-size="25"></g>
        <path d="M253.500 299v59M101 373.500h60" stroke="#f00" stroke-width="3"/>
      </svg>
    </main>

    <!-- Docks -->
    <section class="flex w-[1594px] shrink-0 flex-col pl-[19px] whitespace-nowrap">
      <div class="flex h-[58px] shrink-0 items-end border-b-[2.100px] border-[#bcbcbc]">
        <span class="mb-[-2px] flex h-[56px] w-[119px] items-center justify-center rounded-t-[7px] border-[2.100px] border-b-0 border-[#b8b8b8] bg-linear-to-b from-white to-[#f0f0f0] pt-[3px] text-[22px]"><b class="font-normal" data-w="59">Items</b></span>
        <span class="flex h-[49px] w-[206px] items-center justify-center rounded-tr-[7px] border-[2.100px] border-b-0 border-l-0 border-[#bcbcbc] bg-[#dedede] pt-[6px] text-[22.500px]"><b class="font-normal" data-w="148">Undo History</b></span>
      </div>
      <div class="flex h-[51px] shrink-0 items-center border-t-[2.100px] border-white pt-[2px] pl-[9px] text-[28px]"><span data-w="71">Items</span>
        <svg class="mr-[7px] ml-auto h-[27px] w-[28px]"><use href="#popout"/></svg><svg class="mr-[5px] h-[27px] w-[28px]"><use href="#shut"/></svg></div>

      <div class="h-[320px] shrink-0 border-[2.100px] border-[#bcbcbc] bg-white text-[28px]">
        <div class="flex h-[49px] items-center border-b-[2.100px] border-[#b0b0b0] bg-linear-to-b from-white to-[#ebebeb]">
          <div class="flex h-full w-[106px] items-center border-r-[2.100px] border-[#ccc] pl-[5px]"><svg class="h-[28px] w-[39px]" viewBox="0 0 39 28"><path d="M1 16Q18-2 37 15 20 32 1 16zM3 8Q18-4 35 6" fill="none" stroke="#999" stroke-width="2"/><circle cx="19" cy="14" r="9" fill="#aaa" stroke="#777" stroke-width="2"/><circle cx="19" cy="14" r="4.500" fill="#333"/></svg></div>
          <div class="flex h-full w-[106px] items-center border-r-[2.100px] border-[#ccc] pl-[9px]"><svg class="h-[37px] w-[31px]" viewBox="0 0 31 37"><path d="M6 20v-8q0-10 9.500-10T25 12v8" fill="none" stroke="#999" stroke-width="4"/><rect x="1" y="17" width="29" height="20" rx="4" fill="#666"/></svg></div>
          <span class="mt-[1px] ml-[5px]" data-w="58">Item</span>
        </div>
        <div id="items"></div>
      </div>

      <div class="flex h-[74px] shrink-0 items-end border-b-[2.100px] border-[#bcbcbc] text-[22.500px]">
        <span class="flex h-[49px] w-[136px] items-center justify-center rounded-tl-[7px] border-[2.100px] border-r-0 border-b-0 border-[#bcbcbc] bg-[#dedede] pt-[6px]"><b class="font-normal" data-w="76">Layout</b></span>
        <span class="mb-[-2px] flex h-[56px] w-[228px] items-center justify-center rounded-t-[7px] border-[2.100px] border-b-0 border-[#b8b8b8] bg-linear-to-b from-white to-[#f0f0f0] pt-[3px]"><b class="font-normal" data-w="167">Item Properties</b></span>
        <span class="flex h-[49px] w-[133px] items-center justify-center border-t-[2.100px] border-r-[2.100px] border-[#bcbcbc] bg-[#dedede] pt-[6px]"><b class="font-normal" data-w="74">Guides</b></span>
        <span class="flex h-[49px] w-[109px] items-center justify-center rounded-tr-[7px] border-t-[2.100px] border-r-[2.100px] border-[#bcbcbc] bg-[#dedede] pt-[6px]"><b class="font-normal" data-w="51">Atlas</b></span>
        <svg class="mb-[61px] ml-[164px] h-[4px] w-[44px]" viewBox="0 0 44 4"><path d="M0 2h44" stroke="#bbb" stroke-width="2.500" stroke-dasharray="2.500 4"/></svg>
      </div>
      <div class="flex h-[50px] shrink-0 items-center border-t-[2.100px] border-white pt-[3px] pl-[9px] text-[28px]"><span data-w="197">Item Properties</span>
        <svg class="mr-[7px] ml-auto h-[27px] w-[28px]"><use href="#popout"/></svg><svg class="mr-[5px] h-[27px] w-[28px]"><use href="#shut"/></svg></div>
      <div class="flex h-[42px] shrink-0 items-center border-b-[2.100px] border-[#bbb] bg-[#c7c7c7] pt-[3px] pl-[12px] text-[23px] font-bold"><span data-w="89">Legend</span></div>

      <div class="flex min-h-0 flex-1 overflow-hidden border-b-[2.100px] border-[#bcbcbc]">
        <div class="w-[1531px] shrink-0 border-l-[2.100px] border-[#c0c0c0] pl-[29px] text-[23px]">
          <div class="flex h-[80px] items-center pt-[19px] pl-[4px] font-bold"><svg class="mt-[8px] h-[18px] w-[27px]" viewBox="0 0 27 18"><path d="M1 0h25L13.500 18z" fill="#3c3c3c"/></svg><span class="mb-[6px] ml-[19px]" data-w="196">Main Properties</span></div>
          <div class="flex h-[438px] w-[1472px] flex-col rounded-[5px] border-[2.100px] border-[#d4d4d4] bg-[#ededed] pt-[22px] pl-[31px]">
            <div class="flex h-[62px] items-center"><div class="w-[199px] pt-[2px]"><span data-w="44"><u class="underline-offset-4">T</u>itle</span></div><div class="flex h-full w-[1111px] items-center rounded-[6px] border-[2.100px] border-[#b0b0b0] bg-white pl-[5px] text-[29px]"><span data-w="101">Legend</span></div>
              <svg class="mb-[20px] ml-[23px] h-[26px] w-[48px]" viewBox="0 0 48 26"><path d="M0 16L14 4v22z" fill="#777"/><rect x="14" y="2" width="32" height="22" fill="#f6f6f6" stroke="#888" stroke-width="3"/><path d="M19 11h22" stroke="#666" stroke-width="3"/></svg></div>
            <div class="mt-[19px] flex h-[68px] items-center"><div class="w-[199px] pt-[2px]"><span data-w="46">Map</span></div><div class="flex h-full w-[1204px] items-center rounded-[6px] border-[2.100px] border-[#b0b0b0] bg-linear-to-b from-white to-[#eee] pl-[15px]"><svg class="h-[42px] w-[44px]"><use href="#scroll"/></svg><span class="mt-[2px] ml-[10px]" data-w="66">Map 1</span></div></div>
            <div class="mt-[16.500px] flex h-[62.500px] items-center"><div class="w-[199px] pt-[2px]"><span data-w="144">Wrap text on</span></div><div class="h-full w-[1204px] rounded-[6px] border-[2.100px] border-[#b0b0b0] bg-white"></div></div>
            <div class="mt-[16px] flex h-[68px] items-center"><div class="w-[199px] pt-[2px]"><span data-w="145">Arrangement</span></div><div class="flex h-full w-[1204px] items-center rounded-[6px] border-[2.100px] border-[#b0b0b0] bg-linear-to-b from-white to-[#eee] pl-[15px]"><svg class="h-[42px] w-[14px]" viewBox="0 0 14 42"><path d="M0 0h14v12H0zM0 15h14v12H0zM0 30h14v12H0z" fill="#888"/></svg><span class="mt-[2px] ml-[40px]" data-w="178">Symbols on Left</span><svg class="mr-[19px] ml-auto h-[13px] w-[27px]" viewBox="0 0 27 13"><path d="M0 0h27L13.500 13z" fill="#555"/></svg></div></div>
            <div class="mt-[20px] flex h-[42px] items-center"><div class="h-[42px] w-[42px] border-[2.100px] border-[#bdbdbd] bg-white"><svg class="h-full w-full" viewBox="0 0 40 40"><use href="#tick"/></svg></div><span class="ml-[14px] pt-[5px]" data-w="223">Resize to fit contents</span></div>
          </div>
          <div class="flex h-[68px] items-center pt-[3px] pl-[4px] font-bold"><svg class="mt-[13px] h-[18px] w-[27px]" viewBox="0 0 27 18"><path d="M1 0h25L13.500 18z" fill="#3c3c3c"/></svg><span class="ml-[19px]" data-w="166">Legend Items</span></div>
          <div class="flex h-[960px] w-[1472px] flex-col rounded-t-[5px] border-[2.100px] border-b-0 border-[#d4d4d4] bg-[#ededed] pt-[19px] pl-[31px]">
            <div class="flex h-[55px] items-center"><div class="mb-[4px] h-[42px] w-[42px] border-[2.100px] border-[#bdbdbd] bg-white"></div><span class="mt-[2px] ml-[14px]" data-w="138">Auto update</span>
              <div class="mr-[32px] ml-auto flex h-full w-[183px] items-center justify-center rounded-[6px] border-[2.100px] border-[#b5b5b5] bg-linear-to-b from-white to-[#f1f1f1] pt-[5px]"><span data-w="114">Update All</span></div></div>
            <div class="mt-[16px] h-[615px] w-[1405px] border-[2.100px] border-[#b8b8b8] bg-white text-[35px]">
              <div class="flex h-[56px] items-center pt-[2px] pl-[81px]"><svg class="size-[26px]" viewBox="0 0 26 26"><circle cx="13" cy="13" r="11.500" fill="#e4517f" stroke="#4a3540" stroke-width="2.500"/></svg><span class="ml-[25px]" data-w="156">gcp_2022</span></div>
              <div class="flex h-[54px] items-center pl-[19px]"><svg class="h-[13px] w-[24px]" viewBox="0 0 24 13"><path d="M0 0h24L12 13z" fill="#666"/></svg><svg class="ml-[31px] h-[40px] w-[41px]" viewBox="0 0 42 42"><path d="M0 0h42v28H28v14H0z" fill="#b2cbe8"/><path d="M0 0h14v14H0zM28 0h14v14H28zM14 14h14v14H14zM0 28h14v14H0z" fill="#2b3f57"/></svg><span class="ml-[17px]" data-w="275">DEM_differences</span></div>
              <div class="flex h-[51px] items-center pl-[130px]"><span data-w="221">Band 1 (Gray)</span></div>
              <div class="flex h-[252px] pl-[130px] text-[30px]"><svg class="h-[252px] w-[43px]"><rect width="43" height="252" fill="url(#ramp)"/></svg><div class="flex flex-col justify-between pt-[6px] pb-[3px] pl-[11px]"><span data-w="148">13.885498</span><span data-w="161">-28.447998</span></div></div>
            </div>
            <div class="mt-[17px] flex h-[56px] [&>span]:flex [&>span]:h-[56px] [&>span]:w-[58px] [&>span]:items-center [&>span]:justify-center [&>span]:rounded-[6px] [&>span]:border-[2.100px] [&>span]:border-[#c0c0c0] [&>span]:bg-linear-to-b [&>span]:from-white [&>span]:to-[#eee]">
              <span><svg class="h-[30px] w-[36px]" viewBox="0 0 36 30"><path d="M2 2h32L18 28z" fill="#6794c6" stroke="#466f9f" stroke-width="2"/></svg></span>
              <span class="ml-[9px]"><svg class="h-[30px] w-[36px]" viewBox="0 0 36 30"><path d="M2 28h32L18 2z" fill="#6794c6" stroke="#466f9f" stroke-width="2"/></svg></span>
              <span class="ml-[9px]"><svg class="size-[42px]" viewBox="0 0 42 42"><g fill="none" stroke="#888" stroke-width="2.500"><path d="M8 15H3v22h22M13 9H9v22h22V27M15 8h17v19H15z"/></g><path d="M18 22V8q0-5 4-5t4 5v14" fill="none" stroke="#5580aa" stroke-width="2.500"/><path d="M31 25v13M24.500 31.500h13" stroke="#64a068" stroke-width="5"/></svg></span>
              <span class="ml-[9px]"><svg class="size-[38px]" viewBox="0 0 38 38"><path d="M14 3h10v11h11v10H24v11H14V24H3V14h11z" fill="#fff" stroke="#4a8f4d" stroke-width="2.800"/><path d="M19 8v22M8 19h22" stroke="#3e843f" stroke-width="3.500"/></svg></span>
              <span class="ml-[9px]"><svg class="h-[18px] w-[38px]" viewBox="0 0 38 18"><rect x="2" y="2" width="34" height="14" fill="#fff" stroke="#e8544f" stroke-width="2.800"/><path d="M6 9h26" stroke="#e8332d" stroke-width="4"/></svg></span>
              <span class="ml-[8px]"><svg class="size-[42px]" viewBox="0 0 42 42"><path d="M6 4h22l6 8v26H6z" fill="#fff" stroke="#aaa" stroke-width="2"/><path d="M16 38l3-13L32 3l8 4-14 24z" fill="#e4c63a" stroke="#8c7a25" stroke-width="2"/><path d="M16 38l2-8 5 3z" fill="#333"/></svg></span>
              <span class="ml-[9px] pb-[8px] font-['Liberation_Sans'] text-[44px] text-[#c6bfc6]">ε</span>
              <span class="ml-[9px] font-['Liberation_Serif'] text-[38px] font-bold text-[#c6bfc6]">Σ</span>
              <span class="ml-[784px]"><svg class="size-[42px]" viewBox="0 0 42 42"><path d="M20 7Q6 0 6 9q0 4 8 4-10 0-10 7 1 9 18 4" fill="none" stroke="#bbb" stroke-width="3"/><path d="M20 22h18v16h-6V28h-5v10h-7z" fill="#ccc"/></svg></span>
              <span class="ml-[2px] !w-[36px]"><svg class="h-[12px] w-[24px]" viewBox="0 0 24 12"><path d="M0 0h24L12 12z" fill="#999"/></svg></span>
            </div>
            <div class="mt-[20px] flex h-[42px] items-center"><div class="h-[42px] w-[42px] border-[2.100px] border-[#bdbdbd] bg-white"></div><span class="mt-[4px] ml-[14px]" data-w="380">Only show items inside linked map</span></div>
            <div class="mt-[27px] flex h-[42px] items-center"><div class="h-[42px] w-[42px] border-[2.100px] border-[#bdbdbd] bg-white"></div><span class="mt-[5px] ml-[14px]" data-w="488">Only show items inside current atlas features</span></div>
          </div>
        </div>
        <div class="flex w-[44px] flex-col border-x-[2.100px] border-[#bdbdbd] bg-[#e4e4e4]">
          <div class="flex h-[42px] items-center justify-center border-b-[2.100px] border-[#bdbdbd] bg-[#f8f8f8]"><svg class="h-[12px] w-[24px]" viewBox="0 0 24 12"><path d="M0 12h24L12 0z" fill="#555"/></svg></div>
          <div class="h-[896px] border-b-[2.100px] border-[#bdbdbd] bg-linear-to-r from-white to-[#f0f0f0]"></div>
        </div>
      </div>
    </section>
  </div>

  <!-- Status bar -->
  <footer class="flex h-[69px] shrink-0 items-center pt-[3px] pl-[2792px] text-[23px] whitespace-nowrap">
    <div class="w-[263px] pt-[6px]"><span data-w="90">x: 0 mm</span></div><div class="w-[262px] pt-[6px]"><span data-w="114">y: -50 mm</span></div><div class="w-[261px] pt-[6px]"><span data-w="82">page: 1</span></div>
    <div class="flex h-[64px] w-[305px] border-x-[2.100px] border-[#b5b5b5] bg-white"><div class="flex flex-1 items-center pt-[6px] pl-[7px]"><span data-w="69">73.7%</span></div><div class="flex w-[49px] items-center justify-center border-l-[2.100px] border-[#b5b5b5] bg-linear-to-b from-[#f5f5f5] to-white pt-[4px]"><svg class="h-[10px] w-[20px]" viewBox="0 0 20 10"><path d="M0 0h20L10 10z" fill="#555"/></svg></div></div>
    <svg class="mt-[3px] ml-[17px] h-[34px] w-[244px]" viewBox="0 0 244 34"><rect x="1" y="12" width="241" height="9" rx="4" fill="#ddd" stroke="#b5b5b5" stroke-width="2"/><rect x="1" y="12" width="20" height="9" rx="4" fill="#3096e8" stroke="#1a6cb5" stroke-width="2"/><rect x="16" y="2" width="31" height="30" rx="6" fill="#fafafa" stroke="#aaa" stroke-width="2"/></svg>
  </footer>
</div>

<!-- Annotations -->
<div class="absolute inset-0 font-['Lato',sans-serif] text-[57px] whitespace-nowrap">
  <svg class="absolute inset-0 h-[2475px] w-[4197px]" viewBox="0 0 4197 2475">
    <g fill="none" stroke="#f00" stroke-width="9"><rect x="2643.500" y="2187.500" width="122" height="78"/><rect x="2839.500" y="2185.500" width="122" height="78"/><rect x="2970" y="2185.500" width="67" height="78"/><path d="M2966 2181v87"/></g>
    <g stroke="#f00" stroke-width="9.500"><path d="M3050 1237L2708 1477M2902 2184L3134 1932M3042 2231L3136 2339M2640 2226L2548 2220"/></g>
    <g fill="#f00"><path d="M2688 1491L2704 1462 2721 1486z"/><path d="M3152 1911L3144 1943 3121 1922z"/><path d="M3152 2358L3121 2346 3144 2325z"/><path d="M2527 2219L2556 2206 2554 2235z"/></g>
  </svg>
  <div class="absolute top-[1027px] left-[3042px] flex h-[192px] w-[1052px] flex-col items-center border-[3.1px] border-black bg-white pt-[15px] leading-[77px]"><span data-w="911">Unflag in order to manually modify</span><span data-w="438">the legend items</span></div>
  <div class="absolute top-[1855px] left-[3150px] flex h-[113px] w-[836px] items-center justify-center border-[3.1px] border-black bg-white"><span data-w="738">Add or remove legend items</span></div>
  <div class="absolute top-[2303px] left-[3150px] flex h-[113px] w-[1047px] items-center border-[3.1px] border-black bg-white pl-[37px]"><span data-w="967">Modify the layer name on the legend</span></div>
  <div class="absolute top-[2162px] left-[1481px] flex h-[115px] w-[1047px] items-center justify-center border-[3.1px] border-black bg-white"><span data-w="963">Modify the order of the visible layers</span></div>
</div>
</div>

<script>
// Item list rows
const icons = [
  '<path d="M2 2h9v10H2zM2 24h9v10H2zM2 46h9v10H2z" fill="#ccc" stroke="#444" stroke-width="4"/><path d="M18 8h25M18 29h39M18 52h18" stroke="#aaa" stroke-width="6"/>',
  '<rect x="2" y="11" width="56" height="40" fill="#444" stroke="#999" stroke-width="4"/><path d="M4 34l16-14 36 16v13H4z" fill="#f4f4f4"/>',
  '<rect x="1" y="21" width="58" height="19" rx="3" fill="#85abcf" stroke="#6f97bd" stroke-width="2"/><path d="M7 25h14v11H7zM39 25h14v11H39z" fill="#1f4a75"/><path d="M23 26h14v9H23z" fill="#cfe8ff"/>',
  '<use href="#scroll" width="60" height="60"/>'];
const names = [['Legend', 100], ['North Arrow', 162], ['<Scalebar>', 142], ['Map 1', 79]];
document.getElementById('items').innerHTML = names.map(([n, w], i) => `
  <div class="flex h-[54px] items-center pt-[2px] ${i === 2 ? 'bg-[#efefef]' : ''}">
    <div class="ml-[7px] h-[34px] w-[35px] border-[2.100px] border-[#c0c0c0] bg-white"><svg class="h-full w-full" viewBox="0 0 40 40"><use href="#tick"/></svg></div>
    <div class="ml-[71px] h-[34px] w-[35px] border-[2.100px] border-[#c0c0c0] bg-white"></div>
    <svg class="ml-[73px] size-[44px]" viewBox="0 0 60 60">${icons[i]}</svg>
    <span class="mb-[15px] ml-[18px] ${i === 0 ? 'font-bold' : ''}" data-w="${w}">${n.replace('<', '&lt;')}</span>
  </div>`).join('');

// Ground control points
const upper = [[1022,313],[991,475],[736,523],[1166,548],[869,584],[1089,704],[1261,695],[1187,801],[1298,802],[1090,861],[957,1046],[759,1130],[831,1207],[683,1241],[739,1343],[467,1341],[700,1419],[356,1485]];
const lower = [[514,350],[537,613],[370,649],[737,649],[542,789],[694,862],[453,1198],[756,1234],[435,1450],[628,1493]];
const pts = upper.map(([x, y]) => [x * .4847 + 1050, y * .4209 + 740]).concat(lower.map(([x, y]) => [x * .4847 + 1050, y * .4464 + 1350]));
document.getElementById('points').innerHTML = pts.map(([x, y]) => `<circle cx="${x}" cy="${y + 1}" r="6.2"/>`).join('');

// Rulers: one labelled tick every 20 mm
let r = '';
for (let mm = -35; mm <= 330; mm += 5) {
  const x = 399 + mm * 6.46, top = mm % 20 === 0 ? 299 : mm % 10 === 0 ? 339 : 346;
  if (x < 2556) r += `<rect x="${x - 1}" y="${top}" width="2.4" height="${358 - top}"/>`;
  if (mm % 20 === 0) r += `<text x="${x + 2}" y="334">${mm}</text>`;
}
for (let mm = -50; mm <= 260; mm += 5) {
  const y = 700 + mm * 6.455, left = mm % 20 === 0 ? 101 : mm % 10 === 0 ? 141 : 148;
  r += `<rect x="${left}" y="${y - 1}" width="${161 - left}" height="2.4"/>`;
  if (mm % 20 === 0) r += `<text transform="translate(136 ${y + (mm >= 100 ? 16 : 13)}) rotate(-90)" text-anchor="end">${mm}</text>`;
}
document.getElementById('ruler').innerHTML = r;

const scale = document.getElementById('root').getBoundingClientRect().width / 4197;
document.fonts.ready.then(() => document.querySelectorAll('[data-w]').forEach(e => {
  e.style.display = 'inline-block';
  e.style.whiteSpace = 'nowrap';
  const w = e.getBoundingClientRect().width / scale;
  e.style.letterSpacing = (+e.dataset.w - w) / e.textContent.length + 'px';
}));
</script>
</body>
</html>
